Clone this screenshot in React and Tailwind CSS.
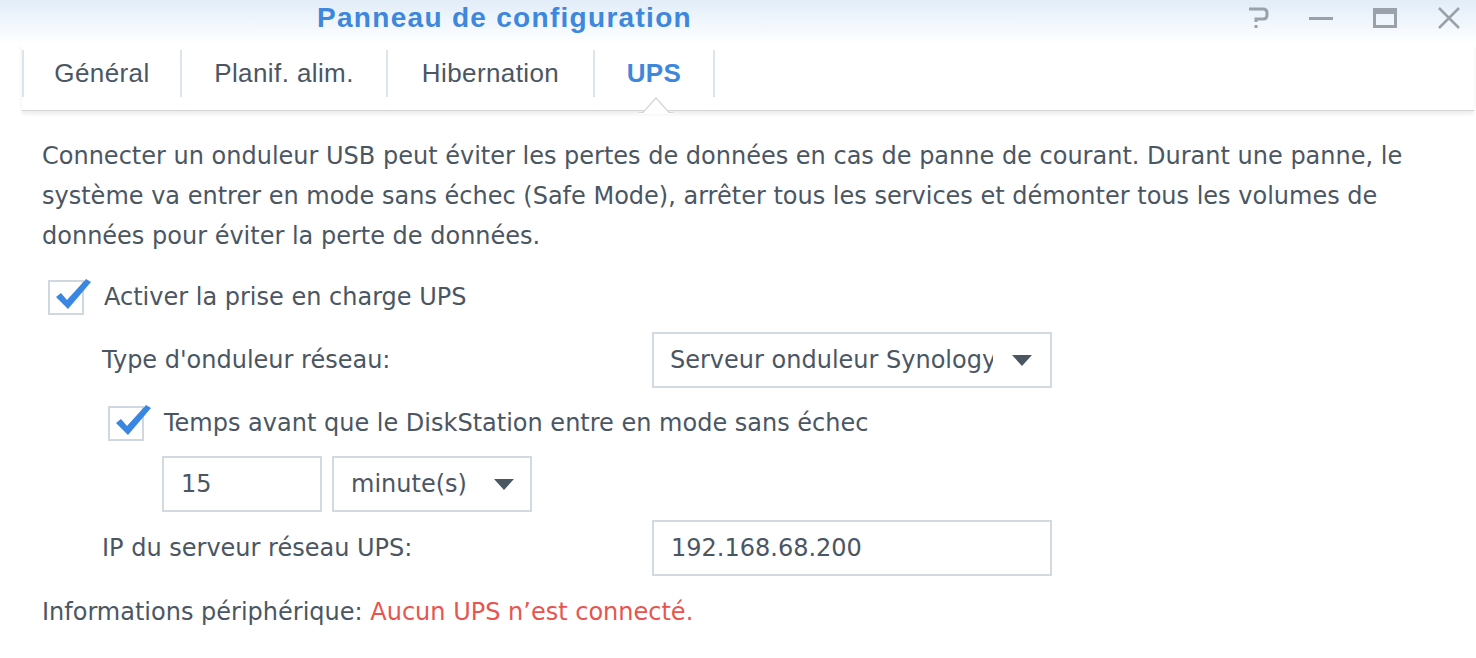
import React from 'react';

const tabs = [
  { label: 'Général', width: 'w-[160px]' },
  { label: 'Planif. alim.', width: 'w-[206px]' },
  { label: 'Hibernation', width: 'w-[207px]' },
  { label: 'UPS', width: 'w-[120px]', active: true },
];

const CheckBox = () => (
  <div className="relative w-[36px] h-[35px] border-2 border-[#cfd7e0] bg-white shrink-0">
    <svg className="absolute left-[3px] top-[-5px]" width="40" height="36" viewBox="0 0 40 36">
      <path d="M3 20 L8 16 L14 23 L33 2 L38 5 L15 32 Z" fill="#3a87e2" />
    </svg>
  </div>
);

const Caret = () => (
  <svg width="20" height="11" viewBox="0 0 20 11">
    <path d="M0 0 L20 0 L10 11 Z" fill="#4b5663" />
  </svg>
);

const App = () => {
  return (
    <div
      className="w-[1476px] h-[658px] bg-white overflow-hidden text-[#4b5663]"
      style={{ fontFamily: '"DejaVu Sans", Verdana, sans-serif' }}
    >
      {/* title bar */}
      <div className="relative h-[44px] bg-gradient-to-b from-[#e2edf9] to-white">
        <div
          className="absolute left-[317px] top-[-3px] text-[28px] font-bold text-[#3d87dc] tracking-[1.3px]"
          style={{ fontFamily: '"Liberation Sans", Arial, sans-serif' }}
        >
          Panneau de configuration
        </div>
        <div className="absolute right-0 top-0 h-[36px] flex items-center">
          <svg width="24" height="22" viewBox="0 0 24 22">
            <path d="M2 2 H16 Q20 2 20 6 V8 Q20 12 16 12 H9 V15" fill="none" stroke="#9aa1aa" strokeWidth="3" />
            <rect x="7.5" y="18" width="3" height="3" fill="#9aa1aa" />
          </svg>
          <div className="ml-[38px] w-[24px] h-[3px] bg-[#9aa1aa]" />
          <div className="ml-[40px] w-[24px] h-[20px] border-[3px] border-t-[6px] border-[#9aa1aa]" />
          <svg className="ml-[40px] mr-[15px]" width="24" height="22" viewBox="0 0 24 22">
            <path d="M2 1 L22 21 M22 1 L2 21" stroke="#9aa1aa" strokeWidth="2.5" />
          </svg>
        </div>
      </div>

      {/* tabs */}
      <div className="relative ml-[22px] mr-[2px] pt-[6px] border-b border-[#d4d4d4] shadow-[0_3px_4px_rgba(0,0,0,0.08)]">
        <div
          className="flex h-[47px] mb-[13px]"
          style={{ fontFamily: '"Liberation Sans", Arial, sans-serif' }}
        >
          {tabs.map((t, i) => (
            <div
              key={t.label}
              className={`${t.width} flex items-center justify-center border-r-2 border-[#dce4ed] text-[26px] tracking-[0.4px] ${i === 0 ? 'border-l-2' : ''} ${t.active ? 'font-bold text-[#3d87dc]' : 'text-[#4b5663]'}`}
            >
              {t.label}
            </div>
          ))}
        </div>
        <svg className="absolute left-[617px] bottom-[-4px]" width="34" height="18" viewBox="0 0 34 18">
          <path d="M0 16 H4 L17 2 L30 16 H34 V18 H0 Z" fill="white" />
          <path d="M0 16.5 H4 L17 2 L30 16.5 H34" fill="none" stroke="#d4d4d4" strokeWidth="1.2" />
        </svg>
      </div>

      {/* content */}
      <div className="pl-[42px] pr-[30px] pt-[25px] text-[24px]">
        <p className="leading-[40px] w-[1410px]">
          Connecter un onduleur USB peut éviter les pertes de données en cas de panne de courant. Durant une panne, le
          système va entrer en mode sans échec (Safe Mode), arrêter tous les services et démonter tous les volumes de
          données pour éviter la perte de données.
        </p>

        <div className="mt-[23px] ml-[6px] flex items-center gap-[20px]">
          <CheckBox />
          <span>Activer la prise en charge UPS</span>
        </div>

        <div className="mt-[17px] ml-[60px] flex items-center">
          <span className="w-[550px]">Type d'onduleur réseau:</span>
          <div className="w-[400px] h-[56px] border-2 border-[#d2d9e1] flex items-center justify-between pl-[16px] pr-[18px]">
            <span className="w-[323px] overflow-hidden whitespace-nowrap">Serveur onduleur Synology</span>
            <Caret />
          </div>
        </div>

        <div className="mt-[17px] ml-[66px] flex items-center gap-[20px]">
          <CheckBox />
          <span>Temps avant que le DiskStation entre en mode sans échec</span>
        </div>

        <div className="mt-[15px] ml-[120px] flex gap-[10px]">
          <div className="w-[160px] h-[56px] border-2 border-[#d2d9e1] flex items-center pl-[17px]">15</div>
          <div className="w-[200px] h-[56px] border-2 border-[#d2d9e1] flex items-center pl-[17px] pr-[16px]">
            <span className="flex-1">minute(s)</span>
            <Caret />
          </div>
        </div>

        <div className="mt-[8px] ml-[60px] flex items-center">
          <span className="w-[550px]">IP du serveur réseau UPS:</span>
          <div className="w-[400px] h-[56px] border-2 border-[#d2d9e1] flex items-center pl-[17px]">192.168.68.200</div>
        </div>

        <p className="mt-[18px]">
          Informations périphérique: <span className="text-[#e8544f]">Aucun UPS n’est connecté.</span>
        </p>
      </div>
    </div>
  );
};

export default App;
